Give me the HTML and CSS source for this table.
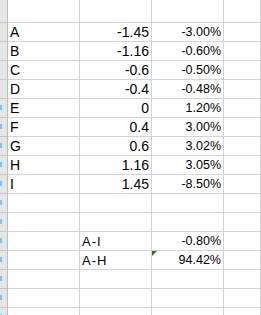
FILE: index.html
```html
<!DOCTYPE html>
<html>
<head>
<meta charset="utf-8">
<link rel="stylesheet" href="styles.css">
</head>
<body>
<div class="sheet">
  <div class="row first"><div class="hdr"></div><div class="c"></div><div class="c"></div><div class="c"></div><div class="c"></div></div>
  <div class="row"><div class="hdr"></div><div class="c lbl">A</div><div class="c num">-1.45</div><div class="c pct">-3.00%</div><div class="c"></div></div>
  <div class="row"><div class="hdr"></div><div class="c lbl">B</div><div class="c num">-1.16</div><div class="c pct">-0.60%</div><div class="c"></div></div>
  <div class="row"><div class="hdr"></div><div class="c lbl">C</div><div class="c num">-0.6</div><div class="c pct">-0.50%</div><div class="c"></div></div>
  <div class="row"><div class="hdr"></div><div class="c lbl">D</div><div class="c num">-0.4</div><div class="c pct">-0.48%</div><div class="c"></div></div>
  <div class="row"><div class="hdr"><span class="mark"></span></div><div class="c lbl">E</div><div class="c num">0</div><div class="c pct">1.20%</div><div class="c"></div></div>
  <div class="row"><div class="hdr"><span class="mark"></span></div><div class="c lbl">F</div><div class="c num">0.4</div><div class="c pct">3.00%</div><div class="c"></div></div>
  <div class="row"><div class="hdr"><span class="mark"></span></div><div class="c lbl">G</div><div class="c num">0.6</div><div class="c pct">3.02%</div><div class="c"></div></div>
  <div class="row"><div class="hdr"><span class="mark"></span></div><div class="c lbl">H</div><div class="c num">1.16</div><div class="c pct">3.05%</div><div class="c"></div></div>
  <div class="row"><div class="hdr"><span class="mark"></span></div><div class="c lbl">I</div><div class="c num">1.45</div><div class="c pct">-8.50%</div><div class="c"></div></div>
  <div class="row"><div class="hdr"><span class="mark"></span></div><div class="c"></div><div class="c"></div><div class="c"></div><div class="c"></div></div>
  <div class="row"><div class="hdr"><span class="mark"></span></div><div class="c"></div><div class="c"></div><div class="c"></div><div class="c"></div></div>
  <div class="row"><div class="hdr"><span class="mark"></span></div><div class="c"></div><div class="c lbl2">A-I</div><div class="c pct">-0.80%</div><div class="c"></div></div>
  <div class="row"><div class="hdr"><span class="mark"></span></div><div class="c"></div><div class="c lbl2">A-H</div><div class="c pct flag">94.42%</div><div class="c"></div></div>
  <div class="row"><div class="hdr"><span class="mark"></span></div><div class="c"></div><div class="c"></div><div class="c"></div><div class="c"></div></div>
  <div class="row"><div class="hdr"><span class="mark"></span></div><div class="c"></div><div class="c"></div><div class="c"></div><div class="c"></div></div>
  <div class="row"><div class="hdr"><span class="mark"></span></div><div class="c"></div><div class="c"></div><div class="c"></div><div class="c"></div></div>
</div>
</body>
</html>
```
FILE: styles.css
```css
html, body {
  margin: 0;
  padding: 0;
  background: #ffffff;
}
body {
  font-family: "Liberation Sans", Arial, sans-serif;
  color: #000000;
  width: 261px;
  height: 315px;
  overflow: hidden;
}
.sheet {
  display: flex;
  flex-direction: column;
}
.row {
  display: grid;
  grid-template-columns: 8px 72px 72px 72px 1fr;
  height: 19px;
  box-sizing: border-box;
}
.row.first {
  height: 23px;
}
.hdr {
  background: #e6e6e6;
  border-right: 1px solid #bcbcbc;
  border-bottom: 1px solid #c4c4c4;
  box-sizing: border-box;
  position: relative;
  overflow: hidden;
}
.mark {
  position: absolute;
  left: 0;
  top: 6px;
  width: 2px;
  height: 5px;
  background: #7cc4ea;
}
.c {
  border-right: 1px solid #d4d4d4;
  border-bottom: 1px solid #d4d4d4;
  box-sizing: border-box;
  display: flex;
  align-items: flex-end;
  padding: 0 2px 1px 2px;
  white-space: nowrap;
  overflow: hidden;
  position: relative;
}
.lbl {
  font-size: 14px;
  line-height: 16px;
  padding-left: 2px;
}
.num {
  font-size: 14px;
  line-height: 16px;
  justify-content: flex-end;
}
.pct {
  font-size: 12.5px;
  line-height: 14px;
  justify-content: flex-end;
  padding-bottom: 2px;
}
.lbl2 {
  font-size: 13px;
  line-height: 15px;
  letter-spacing: 1px;
  padding-left: 2px;
}
.flag::before {
  content: "";
  position: absolute;
  left: 0;
  top: 0;
  width: 0;
  height: 0;
  border-top: 5px solid #1c7a1c;
  border-right: 5px solid transparent;
}
```
